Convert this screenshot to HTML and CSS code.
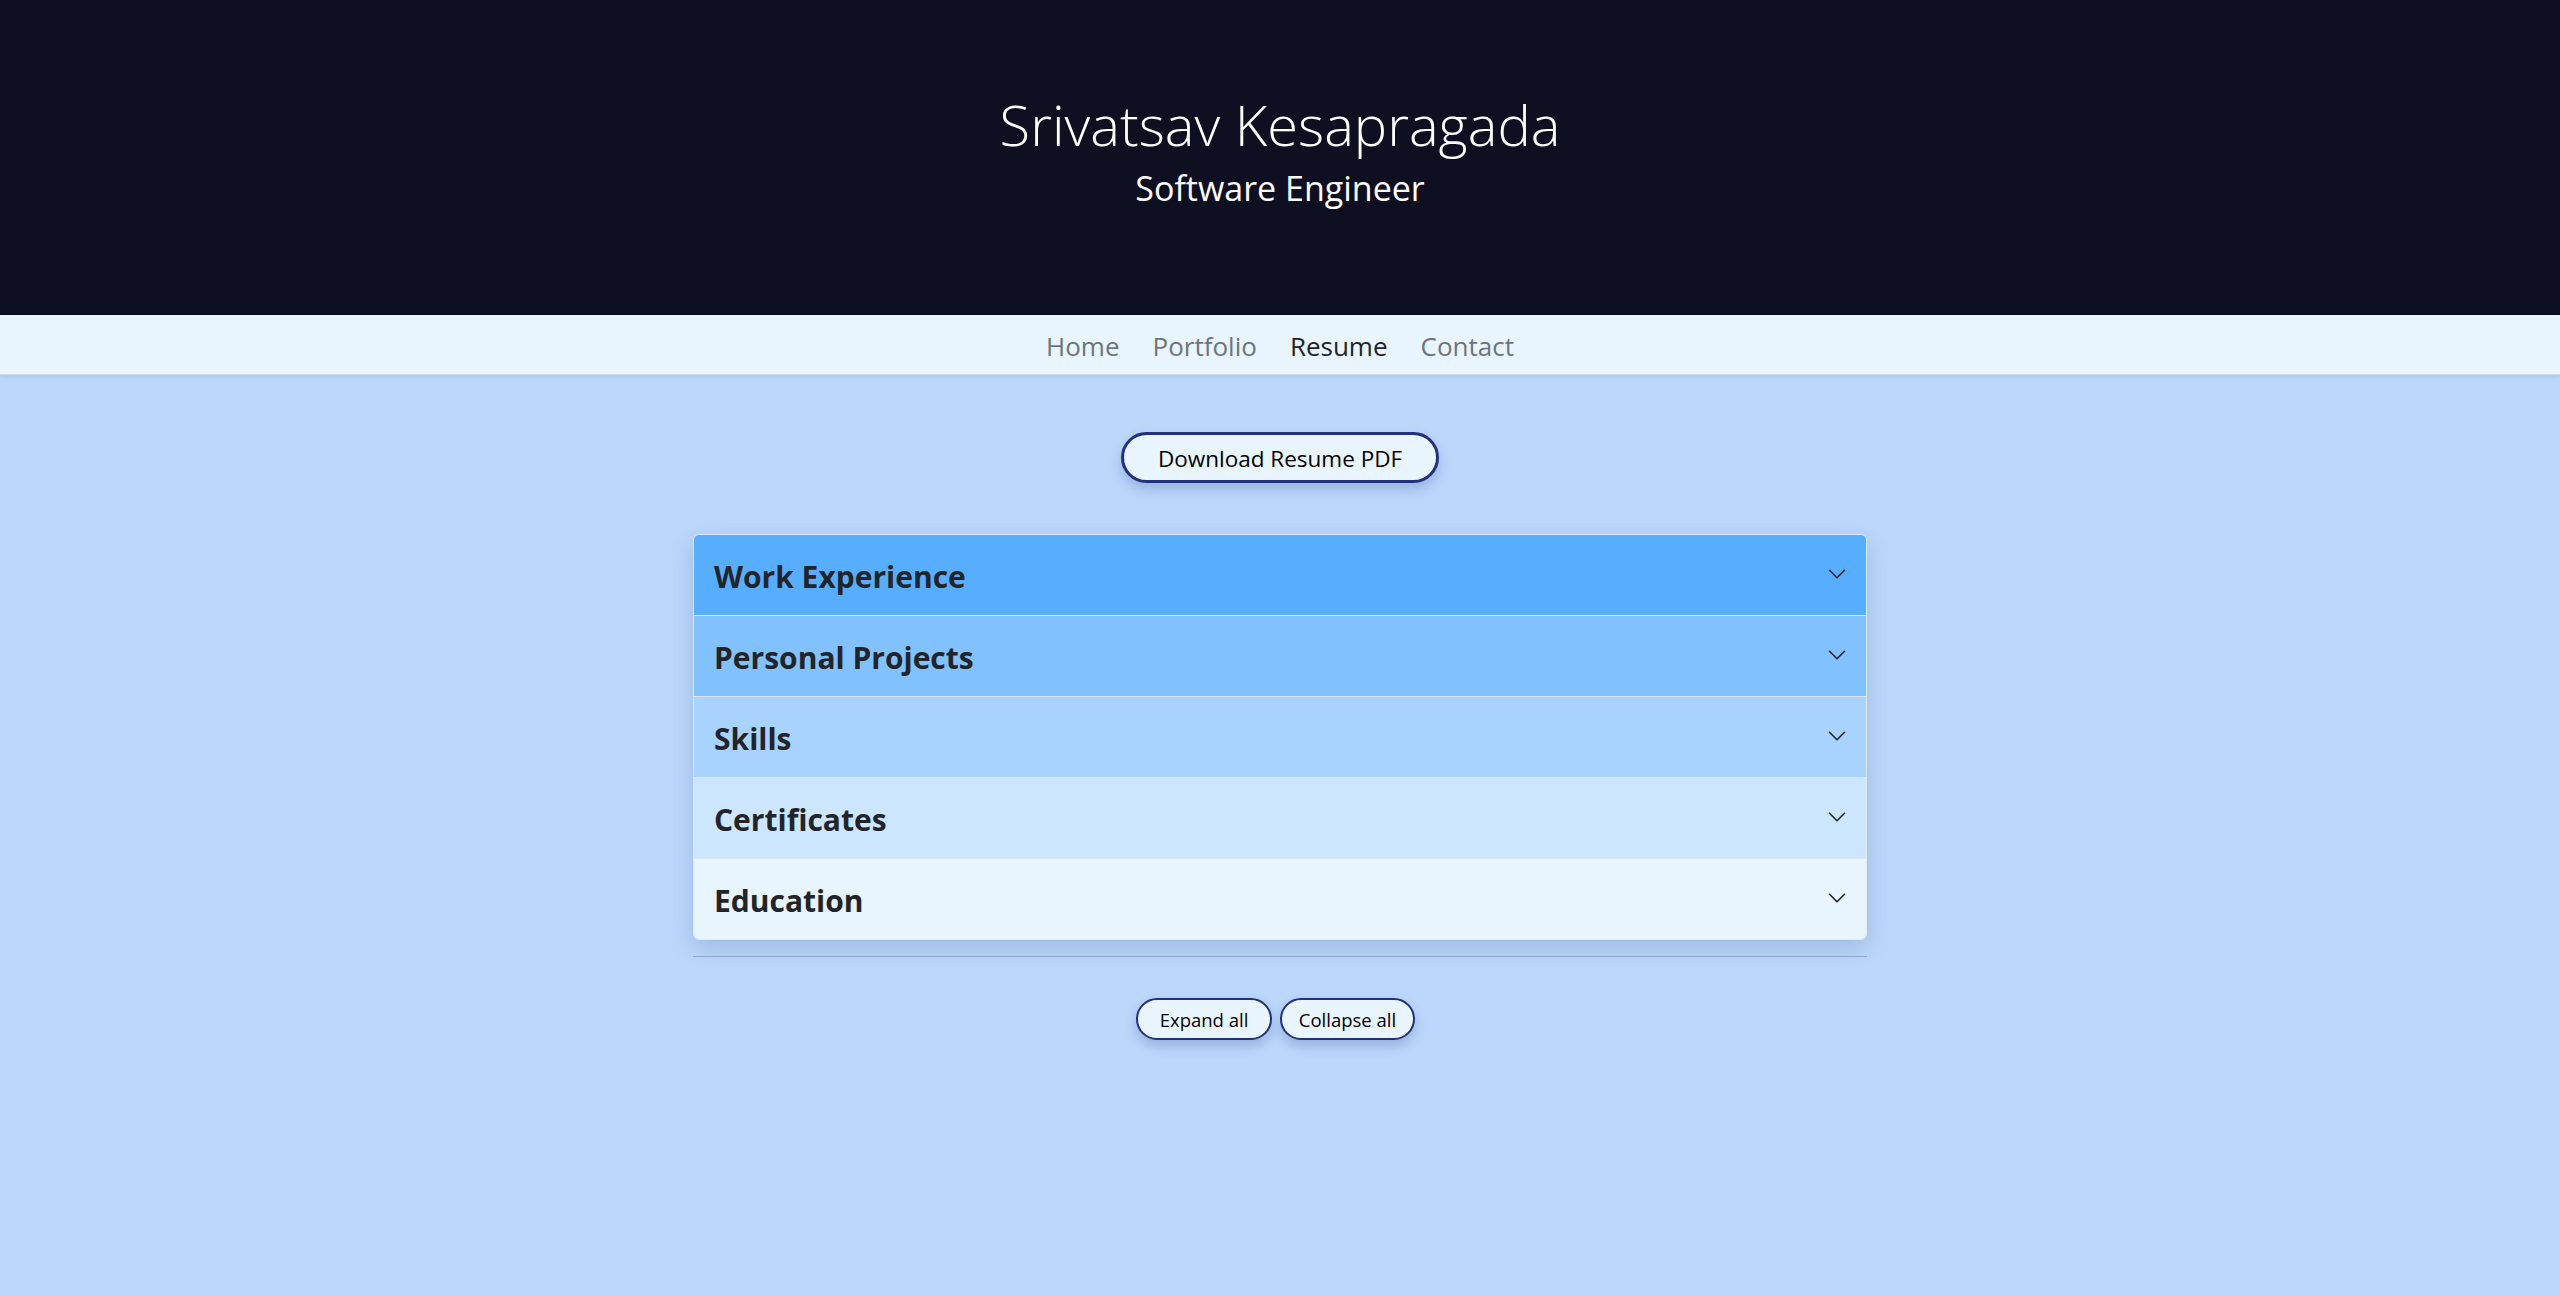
FILE: index.html
```html
<!DOCTYPE html>
<html lang="en">
<head>
<meta charset="utf-8">
<title>Resume - Srivatsav Kesapragada</title>
<link rel="stylesheet" href="styles.css">
</head>
<body>
<header class="hero">
  <h1 class="hero-title">Srivatsav Kesapragada</h1>
  <p class="hero-sub">Software Engineer</p>
</header>
<nav class="navbar">
  <a class="nav-link" href="#">Home</a>
  <a class="nav-link" href="#">Portfolio</a>
  <a class="nav-link active" href="#">Resume</a>
  <a class="nav-link" href="#">Contact</a>
</nav>
<main class="content">
  <div class="download-row">
    <a class="pill pill-lg" href="#">Download Resume PDF</a>
  </div>
  <div class="accordion">
    <div class="acc-item acc-1">
      <span class="acc-title">Work Experience</span>
      <svg class="chev" viewBox="0 0 16 16" width="20" height="20"><path d="M2 5L8 11L14 5"/></svg>
    </div>
    <div class="acc-item acc-2">
      <span class="acc-title">Personal Projects</span>
      <svg class="chev" viewBox="0 0 16 16" width="20" height="20"><path d="M2 5L8 11L14 5"/></svg>
    </div>
    <div class="acc-item acc-3">
      <span class="acc-title">Skills</span>
      <svg class="chev" viewBox="0 0 16 16" width="20" height="20"><path d="M2 5L8 11L14 5"/></svg>
    </div>
    <div class="acc-item acc-4">
      <span class="acc-title">Certificates</span>
      <svg class="chev" viewBox="0 0 16 16" width="20" height="20"><path d="M2 5L8 11L14 5"/></svg>
    </div>
    <div class="acc-item acc-5">
      <span class="acc-title">Education</span>
      <svg class="chev" viewBox="0 0 16 16" width="20" height="20"><path d="M2 5L8 11L14 5"/></svg>
    </div>
  </div>
  <hr class="divider">
  <div class="btn-row">
    <button class="pill pill-sm pill-expand">Expand all</button>
    <button class="pill pill-sm pill-collapse">Collapse all</button>
  </div>
</main>
</body>
</html>
```
FILE: styles.css
```css
* { box-sizing: border-box; }
html, body { margin: 0; padding: 0; }
body {
  background: #bbd7fc;
  font-family: "Open Sans", "Noto Sans", sans-serif;
  color: #212529;
  min-height: 1295px;
}
.hero {
  background: #0e1022;
  height: 315px;
  display: flex;
  flex-direction: column;
  align-items: center;
  padding-top: 86px;
}
.hero-title {
  margin: 0;
  color: #fff;
  font-weight: 300;
  font-size: 56px;
  line-height: 76px;
}
.hero-sub {
  margin: 5px 0 0;
  color: #fff;
  font-weight: 400;
  font-size: 34px;
  line-height: 42px;
}
.navbar {
  height: 60px;
  background: #e8f4fe;
  border-bottom: 1px solid #d2dae3;
  box-shadow: 0 2px 4px rgba(60, 90, 140, 0.12);
  display: flex;
  justify-content: center;
  align-items: center;
  gap: 33px;
}
.nav-link {
  text-decoration: none;
  color: #6c757d;
  font-size: 26px;
  line-height: 40px;
  padding-top: 2px;
}
.nav-link.active { color: #212529; }
.content {
  width: 1174px;
  margin: 0 auto;
  padding-top: 57px;
}
.download-row { display: flex; justify-content: center; }
.pill {
  display: inline-flex;
  align-items: center;
  justify-content: center;
  background: #e8f4fe;
  border: 3px solid #24307f;
  border-radius: 999px;
  color: #000;
  text-decoration: none;
  font-family: inherit;
  box-shadow: 0 6px 12px rgba(40, 70, 130, 0.25);
}
.pill-lg {
  width: 318px;
  height: 51px;
  font-size: 22.5px;
  padding-top: 1px;
}
.accordion {
  margin-top: 51px;
  border-radius: 6px;
  overflow: hidden;
  border: 1px solid #dfe9f4;
  box-shadow: 0 8px 22px rgba(50, 80, 140, 0.22);
}
.acc-item {
  height: 81px;
  display: flex;
  align-items: center;
  justify-content: space-between;
  padding: 0 20px;
  border-top: 1px solid #dbe7f3;
}
.acc-item:first-child { border-top: 0; height: 80px; }
.acc-title {
  font-weight: 700;
  font-size: 30px;
  color: #212529;
  padding-top: 2px;
}
.chev {
  fill: none;
  stroke: #212529;
  stroke-width: 1.3;
  stroke-linecap: round;
  stroke-linejoin: round;
  margin-right: -1px;
  margin-bottom: 2px;
}
.acc-1 { background: #58aefe; }
.acc-2 { background: #81c1fe; }
.acc-3 { background: #a7d3fe; }
.acc-4 { background: #cbe6fe; }
.acc-5 { background: #e8f4fe; }
.divider {
  margin: 16px 0 0;
  border: 0;
  border-top: 1.5px solid #8fa5c9;
}
.btn-row {
  display: flex;
  justify-content: center;
  gap: 8px;
  margin-top: 41px;
  padding-right: 9px;
}
.pill-sm {
  height: 42px;
  font-size: 18.5px;
  padding: 0;
  border-width: 2.5px;
  cursor: pointer;
}
.pill-expand { width: 136px; }
.pill-collapse { width: 135px; }
```
